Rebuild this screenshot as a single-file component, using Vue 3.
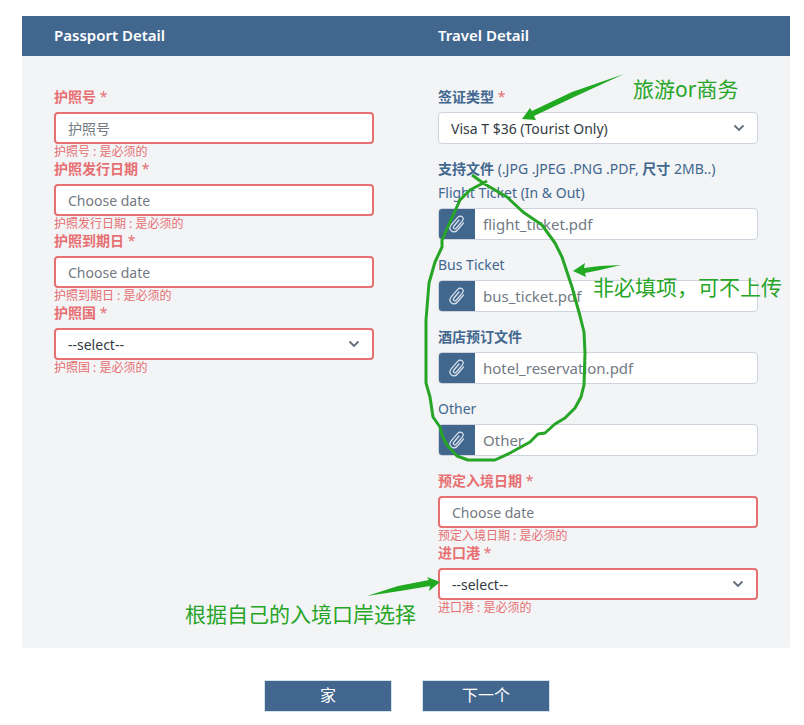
<script setup>
import { reactive } from 'vue'

const passportFields = [
  { key: 'number', label: '护照号', type: 'text', placeholder: '护照号' },
  { key: 'issued', label: '护照发行日期', type: 'text', placeholder: 'Choose date' },
  { key: 'expires', label: '护照到期日', type: 'text', placeholder: 'Choose date' },
  { key: 'country', label: '护照国', type: 'select' }
]

const attachments = [
  { key: 'flight', label: 'Flight Ticket (In & Out)', placeholder: 'flight_ticket.pdf' },
  { key: 'bus', label: 'Bus Ticket', placeholder: 'bus_ticket.pdf' },
  { key: 'hotel', label: '酒店预订文件', placeholder: 'hotel_reservation.pdf', bold: true },
  { key: 'other', label: 'Other', placeholder: 'Other' }
]

const entryFields = [
  { key: 'entryDate', label: '预定入境日期', type: 'text', placeholder: 'Choose date' },
  { key: 'port', label: '进口港', type: 'select' }
]

const form = reactive({
  number: '',
  issued: '',
  expires: '',
  country: '',
  visaType: 'T',
  flight: '',
  bus: '',
  hotel: '',
  other: '',
  entryDate: '',
  port: ''
})
</script>

<template>
  <form class="page" @submit.prevent>
    <div class="panel">
      <header class="panel-head">
        <h2>Passport Detail</h2>
        <h2>Travel Detail</h2>
      </header>

      <div class="panel-body">
        <section class="column">
          <div v-for="f in passportFields" :key="f.key" class="field invalid">
            <label class="field-label bold" :for="f.key">{{ f.label }} <span class="star">*</span></label>
            <select v-if="f.type === 'select'" :id="f.key" v-model="form[f.key]" class="control select">
              <option value="">--select--</option>
            </select>
            <input v-else :id="f.key" v-model="form[f.key]" class="control" type="text" :placeholder="f.placeholder" />
            <p class="error">{{ f.label }} : 是必须的</p>
          </div>
        </section>

        <section class="column">
          <div class="field spaced">
            <label class="field-label bold" for="visaType">签证类型 <span class="star">*</span></label>
            <select id="visaType" v-model="form.visaType" class="control select">
              <option value="T">Visa T $36 (Tourist Only)</option>
            </select>
          </div>

          <p class="field-label"><b>支持文件</b> (.JPG .JPEG .PNG .PDF, <b>尺寸</b> 2MB..)</p>
          <div v-for="a in attachments" :key="a.key" class="field spaced">
            <label class="field-label" :class="{ bold: a.bold }" :for="a.key">{{ a.label }}</label>
            <div class="upload">
              <button type="button" class="clip-btn" :aria-label="a.label">
                <svg viewBox="0 0 16 18" width="16" height="18">
                  <path d="M14.500 8 8.500 15C6.500 17.300 4 17.200 2.200 15.800.5 14.200.6 12 2 10.200L8.500 2.600C10 .8 12 .7 13.200 1.800c1.400 1.200 1.100 3 0 4.400L7.500 13c-.9 1-2.100 1-2.700.4-.7-.7-.5-1.600.2-2.400l5-6" />
                </svg>
              </button>
              <input :id="a.key" v-model="form[a.key]" type="text" :placeholder="a.placeholder" />
            </div>
          </div>

          <div v-for="f in entryFields" :key="f.key" class="field invalid">
            <label class="field-label bold" :for="f.key">{{ f.label }} <span class="star">*</span></label>
            <select v-if="f.type === 'select'" :id="f.key" v-model="form[f.key]" class="control select">
              <option value="">--select--</option>
            </select>
            <input v-else :id="f.key" v-model="form[f.key]" class="control" type="text" :placeholder="f.placeholder" />
            <p class="error">{{ f.label }} : 是必须的</p>
          </div>
        </section>
      </div>

      <!-- 手写批注 -->
      <svg class="notes" viewBox="22 16 768 632">
        <path class="arrow" d="M624 74 L572 92 L532 111 L530 108 L522 119 L536 120 L534 116 L574 97 Z" />
        <path class="arrow" d="M621 265 L600 266 L584 268 L585 263 L573 271 L586 277 L585 273 L600 270 Z" />
        <path class="arrow" d="M367 596 L398 586 L429 580 L427 577 L440 582 L429 591 L430 586 L400 591 Z" />
        <path
          class="loop"
          d="M472 175 L483 183 L507 197 L523 212 L542 225 L555 243 L562 257 L572 287 L580 316 L584 332 L585 353 L584 385 L581 397 L575 408 L565 418 L555 424 L545 433 L538 434 L530 442 L510 453 L495 460 L468 460 L457 456 L447 445 L442 435 L440 427 L433 417 L430 397 L426 383 L426 320 L429 283 L435 262 L442 247 L442 240 L450 222 L460 200 L470 190 L487 181"
        />
        <text x="633" y="97">旅游or商务</text>
        <text x="593" y="295">非必填项，可不上传</text>
        <text x="185" y="622">根据自己的入境口岸选择</text>
      </svg>
    </div>

    <footer class="actions">
      <button type="button">家</button>
      <button type="submit">下一个</button>
    </footer>
  </form>
</template>

<style>
body {
  margin: 0;
  background: #fff;
}
</style>

<style scoped>
.page {
  padding: 16px 14px 12px 22px;
  font-family: 'Noto Sans', 'Noto Sans CJK SC', sans-serif;
  font-size: 14px;
  color: #41678f;
}

.page * {
  box-sizing: border-box;
}

.panel {
  position: relative;
  background: #f2f4f6;
  border-radius: 0 0 2px 2px;
}

.panel-head,
.panel-body {
  display: grid;
  grid-template-columns: 1fr 1fr;
}

.panel-head {
  background: #41678f;
}

.panel-head h2 {
  margin: 0;
  padding: 0 32px;
  color: #fff;
  font-size: 15px;
  font-weight: 600;
  line-height: 38px;
  height: 40px;
}

.column {
  min-width: 0;
  padding: 32px;
}

.spaced {
  margin-bottom: 16px;
}

.field-label {
  display: block;
  height: 24px;
  margin: 0;
  line-height: 18px;
  white-space: nowrap;
}

.bold,
.field-label b {
  font-weight: 700;
}

.star {
  color: #e76f72;
  font-weight: 400;
}

.control {
  display: block;
  width: 100%;
  height: 32px;
  padding: 0 12px;
  border: 1px solid #ced3dd;
  border-radius: 4px;
  background-color: #fff;
  color: #333b44;
  font: inherit;
  outline: none;
}

.select {
  appearance: none;
  background-image: url("data:image/svg+xml,%3Csvg xmlns='http://www.w3.org/2000/svg' viewBox='0 0 12 12'%3E%3Cpath d='M1.500 3.500 6 8l4.500-4.500' fill='none' stroke='%23626c78' stroke-width='1.800'/%3E%3C/svg%3E");
  background-repeat: no-repeat;
  background-position: right 12px center;
  background-size: 12px 12px;
}

.invalid .field-label,
.error {
  color: #e76f72;
}

.invalid .control {
  border: 2px solid #e76f72;
}

.control::placeholder,
.upload input::placeholder {
  color: #727a83;
  opacity: 1;
}

.error {
  margin: 0;
  font-size: 12px;
  line-height: 16px;
}

.upload {
  display: flex;
  height: 32px;
  border: 1px solid #ced3dd;
  border-radius: 4px;
  background: #fff;
  overflow: hidden;
}

.clip-btn {
  display: flex;
  align-items: center;
  justify-content: center;
  width: 36px;
  padding: 0;
  border: 0;
  background: #41678f;
}

.clip-btn path {
  fill: none;
  stroke: #dce5ee;
  stroke-width: 1.2;
  stroke-linecap: round;
}

.upload input {
  flex: 1;
  min-width: 0;
  padding: 0 8px;
  border: 0;
  background: transparent;
  color: #333b44;
  font: inherit;
  font-size: 15px;
  outline: none;
}

.notes {
  position: absolute;
  inset: 0;
  width: 100%;
  height: 100%;
  pointer-events: none;
}

.arrow {
  fill: #21aa21;
}

.loop {
  fill: none;
  stroke: #27a527;
  stroke-width: 3;
  stroke-linejoin: round;
}

.notes text {
  fill: #27a527;
  font-size: 21px;
}

.actions {
  display: flex;
  justify-content: center;
  gap: 30px;
  padding: 32px 0 0 2px;
}

.actions button {
  width: 128px;
  height: 32px;
  padding: 0 0 4px;
  border: 1px solid #d5e2ee;
  background: #41678f;
  color: #fff;
  font: inherit;
  font-size: 16px;
  cursor: pointer;
}
</style>
